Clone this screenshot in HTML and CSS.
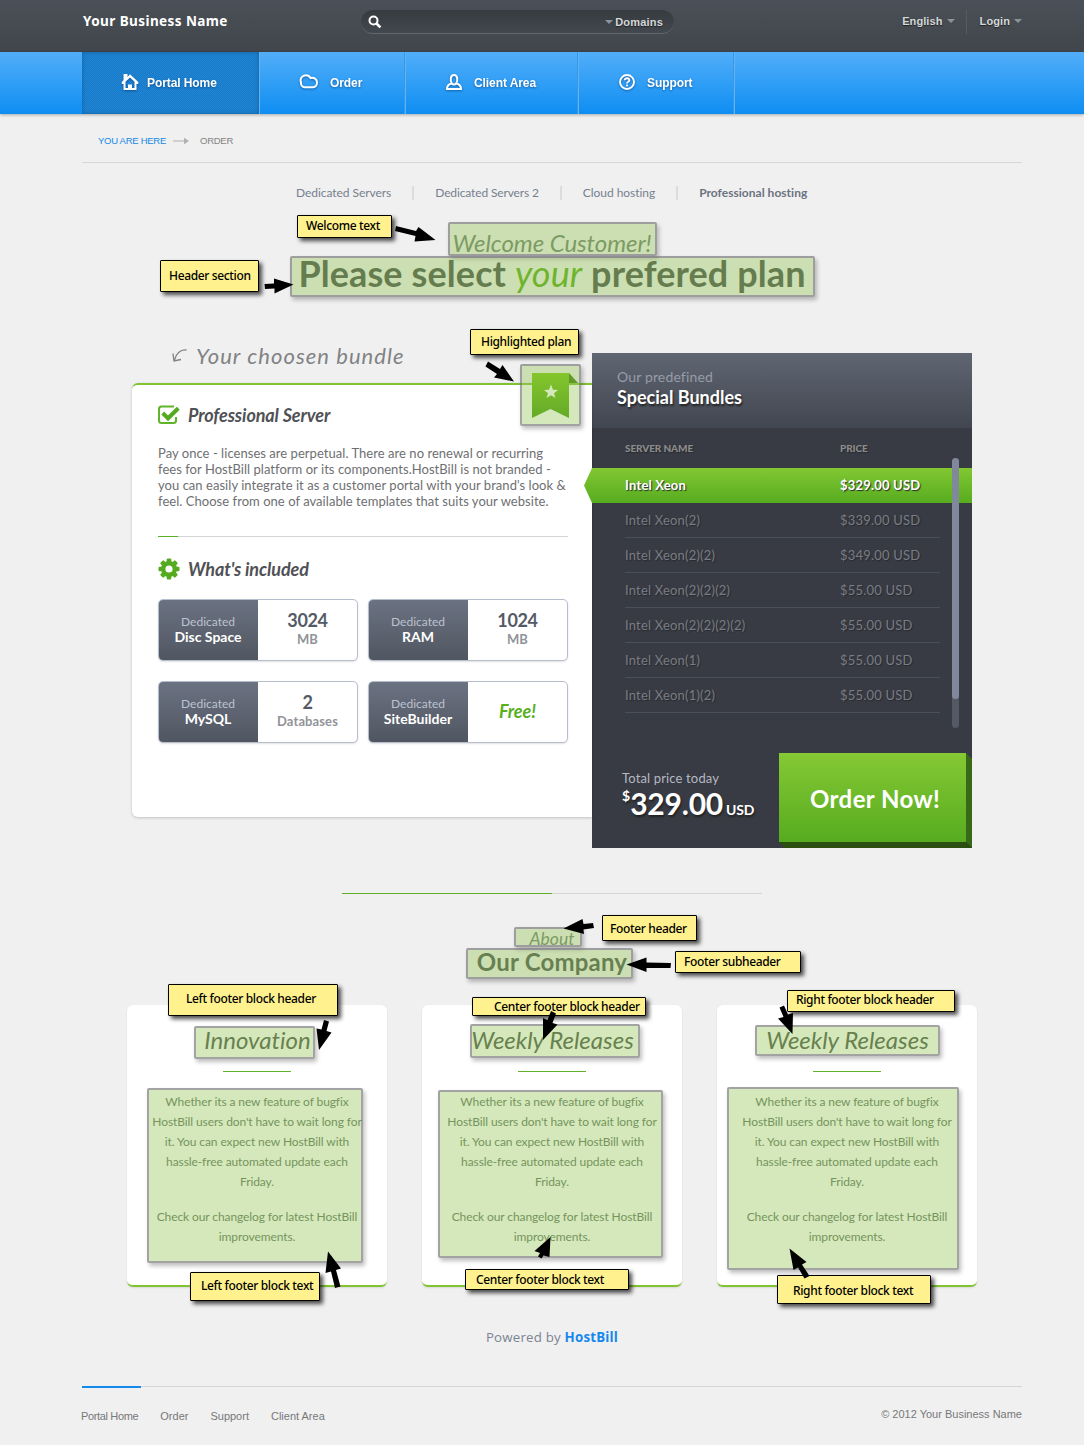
FILE: index.html
```html
<!DOCTYPE html>
<html lang="en">
<head>
<meta charset="utf-8">
<title>Your Business Name - Order</title>
<link rel="stylesheet" href="styles.css">
</head>
<body>
<header class="topbar">
  <div class="wrap topbar-in">
    <div class="brand">Your Business Name</div>
    <div class="search">
      <svg width="14" height="14" viewBox="0 0 14 14"><circle cx="5.5" cy="5.5" r="4" fill="none" stroke="#fff" stroke-width="2"/><path d="M8.5 8.5L12.4 12.4" stroke="#fff" stroke-width="2.6"/></svg>
      <span class="search-type"><i class="caret"></i>Domains</span>
    </div>
    <div class="account"><span class="lang">English<i class="caret"></i></span><span class="login">Login<i class="caret"></i></span></div>
  </div>
</header>
<nav class="mainnav">
  <div class="wrap mainnav-in">
    <a class="nav-item home active"><svg width="18" height="18" viewBox="0 0 18 18"><path d="M2.500 1H6.500V4L9 1.300L17.300 9V11H15.500V17H2.500V11H.7V9L2.500 7.300ZM4.500 8.800V15H7V11.500H11V15H13.500V8.800L9 4.500Z" fill="#fff" fill-rule="evenodd"/></svg><span>Portal Home</span></a>
    <a class="nav-item order"><svg width="20" height="18" viewBox="0 0 20 18"><path d="M6 14.300C3 14.300 1.800 11.800 2 9.500C.5 6 3 2.200 6.800 2.200C9 2.200 10.500 3.200 11.500 5C15 4.200 18 6 18 9.500C18 12.500 16 14.300 13.500 14.300Z" fill="none" stroke="#fff" stroke-width="2"/></svg><span>Order</span></a>
    <a class="nav-item client"><svg width="18" height="18" viewBox="0 0 18 18"><path d="M6.800 10.500C5 8 5.200 2 9 2S13 8 11.200 10.500C14 11 16 12 16 16H2C2 12 4 11 6.800 10.500C8 11.800 10 11.800 11.200 10.500" fill="none" stroke="#fff" stroke-width="2"/></svg><span>Client Area</span></a>
    <a class="nav-item support"><svg width="18" height="18" viewBox="0 0 18 18"><circle cx="9" cy="9" r="7" fill="none" stroke="#fff" stroke-width="1.900"/><path d="M6.700 7.200C6.700 4.500 11.300 4.600 11.300 7.200C11.300 8.800 9 8.700 9 10.400" fill="none" stroke="#fff" stroke-width="1.900"/><rect x="8" y="11.600" width="2" height="1.700" fill="#fff"/></svg><span>Support</span></a>
  </div>
</nav>
<main class="wrap">
  <div class="crumbs"><span class="here">YOU ARE HERE</span><svg width="16" height="8" viewBox="0 0 16 8"><path d="M0 4H12" stroke="#b0b0b0"/><path d="M11 .8L16 4L11 7.200Z" fill="#b0b0b0"/></svg><span>ORDER</span></div>
  <div class="tabs"><a>Dedicated Servers</a><a class="t2">Dedicated Servers 2</a><a class="t3">Cloud hosting</a><a class="t4">Professional hosting</a></div>
  <p class="welcome">Welcome Customer!</p>
  <h1 class="headline">Please select <em>your</em> prefered plan</h1>

  <section class="configurator">
    <div class="plan-col">
      <div class="script-note"><svg width="15" height="14" viewBox="0 0 15 14"><path d="M14.500 1C9 .5 4.500 4 2.500 11M1 4.500L2 12L9 10.500" fill="none" stroke="#808284" stroke-width="1.300"/></svg><span>Your choosen bundle</span></div>
      <div class="plan-card">
        <h2 class="plan-h"><svg width="22" height="20" viewBox="0 0 22 20"><path d="M16 1.500H3.500Q1 1.500 1 4V15.500Q1 18 3.500 18H15.500Q18 18 18 15.500V12" fill="none" stroke="#62b32a" stroke-width="2"/><path d="M4.800 8L10 13.300L20.300 3.200" fill="none" stroke="#55ab20" stroke-width="4"/></svg><span class="ph-a">Professional Server</span></h2>
        <p class="desc">Pay once - licenses are perpetual. There are no renewal or recurring<br>fees for HostBill platform or its components.HostBill is not branded -<br>you can easily integrate it as a customer portal with your brand's look &amp;<br>feel. Choose from one of available templates that suits your website.</p>
        <div class="rule"></div>
        <h2 class="plan-h"><svg width="22" height="22" viewBox="-11 -11 22 22"><g fill="#55ab20"><circle r="8"/><g id="teeth"><rect x="-2.300" y="-10.500" width="4.600" height="21" rx="1"/><rect x="-10.500" y="-2.300" width="21" height="4.600" rx="1"/></g><use href="#teeth" transform="rotate(45)"/></g><circle r="3.600" fill="#fff"/></svg><span class="ph-b">What's included</span></h2>
        <div class="specs">
          <div class="spec"><div class="spec-l"><small>Dedicated</small><b>Disc Space</b></div><div class="spec-r"><strong>3024</strong><small>MB</small></div></div>
          <div class="spec"><div class="spec-l"><small>Dedicated</small><b>RAM</b></div><div class="spec-r"><strong>1024</strong><small>MB</small></div></div>
          <div class="spec"><div class="spec-l"><small>Dedicated</small><b>MySQL</b></div><div class="spec-r"><strong>2</strong><small>Databases</small></div></div>
          <div class="spec"><div class="spec-l"><small>Dedicated</small><b>SiteBuilder</b></div><div class="spec-r"><em>Free!</em></div></div>
        </div>
        <svg class="ribbon" width="50" height="48" viewBox="0 0 50 48"><defs><linearGradient id="rg" x1="0" y1="0" x2="0" y2="1"><stop offset="0" stop-color="#7ac612"/><stop offset="1" stop-color="#45980a"/></linearGradient></defs><path d="M0 0H37V45L18.500 36L0 45Z" fill="url(#rg)"/><path d="M37 0L46 10H37Z" fill="#417a0a"/><path d="M19 11.500L21 16.800L26 17L22 20.300L23.500 25L19 22.300L14.500 25L16 20.300L12 17L17 16.800Z" fill="#fff"/></svg>
      </div>
    </div>
    <aside class="bundles">
      <header class="bundles-h"><span>Our predefined</span><b>Special Bundles</b></header>
      <div class="list">
        <div class="row thead"><span>SERVER NAME</span><span>PRICE</span></div>
        <div class="row on"><span>Intel Xeon</span><span>$329.00 USD</span></div>
        <div class="row"><span>Intel Xeon(2)</span><span>$339.00 USD</span></div>
        <div class="row"><span>Intel Xeon(2)(2)</span><span>$349.00 USD</span></div>
        <div class="row"><span>Intel Xeon(2)(2)(2)</span><span>$55.00 USD</span></div>
        <div class="row"><span>Intel Xeon(2)(2)(2)(2)</span><span>$55.00 USD</span></div>
        <div class="row"><span>Intel Xeon(1)</span><span>$55.00 USD</span></div>
        <div class="row"><span>Intel Xeon(1)(2)</span><span>$55.00 USD</span></div>
        <div class="scroll"><i></i></div>
      </div>
      <div class="checkout">
        <div class="total"><span>Total price today</span><div class="price"><sup>$</sup><b>329.00</b><small>USD</small></div></div>
        <a class="order-btn">Order Now!</a>
      </div>
    </aside>
  </section>

  <div class="divider"></div>
  <p class="about">About</p>
  <h2 class="company">Our Company</h2>
  <section class="blocks">
    <article class="block"><h3>Innovation</h3><hr><p>Whether its a new feature of bugfix<br>HostBill users don't have to wait long for<br>it. You can expect new HostBill with<br>hassle-free automated update each<br>Friday.</p><p>Check our changelog for latest HostBill<br>improvements.</p></article>
    <article class="block"><h3>Weekly Releases</h3><hr><p>Whether its a new feature of bugfix<br>HostBill users don't have to wait long for<br>it. You can expect new HostBill with<br>hassle-free automated update each<br>Friday.</p><p>Check our changelog for latest HostBill<br>improvements.</p></article>
    <article class="block"><h3>Weekly Releases</h3><hr><p>Whether its a new feature of bugfix<br>HostBill users don't have to wait long for<br>it. You can expect new HostBill with<br>hassle-free automated update each<br>Friday.</p><p>Check our changelog for latest HostBill<br>improvements.</p></article>
  </section>
  <p class="powered">Powered by <b>HostBill</b></p>
  <footer class="footer"><nav><a>Portal Home</a><a>Order</a><a>Support</a><a>Client Area</a></nav><span>© 2012 Your Business Name</span></footer>
</main>

<!-- highlight boxes, callouts and arrows laid over the page -->
<div class="notes">
  <div class="hl hl-1"></div><div class="hl hl-2"></div><div class="hl hl-3"></div><div class="hl hl-4"></div><div class="hl hl-5"></div>
  <div class="hl hl-6"></div><div class="hl hl-7"></div><div class="hl hl-8"></div><div class="hl hl-9"></div><div class="hl hl-10"></div><div class="hl hl-11"></div>
  <div class="tag tag-1"><span>Welcome text</span></div>
  <div class="tag tag-2"><span>Header section</span></div>
  <div class="tag tag-3"><span>Highlighted plan</span></div>
  <div class="tag tag-4"><span>Footer header</span></div>
  <div class="tag tag-5"><span>Footer subheader</span></div>
  <div class="tag tag-6"><span>Left footer block header</span></div>
  <div class="tag tag-7"><span>Center footer block header</span></div>
  <div class="tag tag-8"><span>Right footer block header</span></div>
  <div class="tag tag-9"><span>Left footer block text</span></div>
  <div class="tag tag-10"><span>Center footer block text</span></div>
  <div class="tag tag-11"><span>Right footer block text</span></div>
  <svg class="arrows" width="1084" height="1445" viewBox="0 0 1084 1445">
    <path d="M396 226L416 231L418.500 227L435.500 240L414.500 241.500L415.500 236L395 231Z"/>
    <path d="M264.500 284L274 283.500V278.500L293.500 284.500L274.500 293.500V288.500L265 289Z"/>
    <path d="M488 361.500L500 369L502.500 365L514 381.500L494 377.500L497 374L485.500 366.500Z"/>
    <path d="M593 923L583.500 924L582.500 919L563.500 928.500L584 934L583.500 929.500L594 928Z"/>
    <path d="M671 963L646.500 962.500V957.500L626.500 964.500L646.500 972V968L670.500 968Z"/>
    <path d="M324 1020L329 1021.500L326.500 1031L331.500 1032.500L319 1050L316.500 1028.500L321.500 1029.500Z"/>
    <path d="M551 1011L556 1013.500L552.500 1023L557.500 1024.500L543 1040L543 1018L547.500 1020Z"/>
    <path d="M779.500 1007.500L784 1005.500L788 1014.500L793 1013L792.500 1034L778 1018.500L783.500 1017Z"/>
    <path d="M335 1288L340.500 1286.500L336 1270L341 1268.500L328 1251.500L325.500 1273L331 1271.500Z"/>
    <path d="M538 1256.500L541.500 1258.500L543.500 1255.500L549.500 1257L550.500 1237L534.500 1251L540 1253Z"/>
    <path d="M804.500 1278.500L809.500 1276L802 1264.500L806.500 1262L789.500 1248.500L793.500 1270L798 1267.500Z"/>
  </svg>
</div>
</body>
</html>
```
FILE: styles.css
```css
*{box-sizing:border-box}
body{margin:0;background:#f0f0f0;font-family:Lato,"Open Sans",sans-serif;font-variant-ligatures:none;color:#68696c;position:relative;height:1445px;overflow:hidden}
h1,h2,h3,p{margin:0}
svg{display:block;flex:none}
.wrap{width:940px;margin:0 0 0 82px}

.topbar{height:52px;background:linear-gradient(#4a5057,#40464b)}
.topbar-in{display:flex;align-items:flex-start}
.brand{width:279px;padding:11px 0 0 1px;font:bold 13.500px/20px "Noto Sans",sans-serif;color:#fff;letter-spacing:.42px;white-space:nowrap}
.search{width:313px;height:24px;margin-top:10px;border-radius:12px;background:linear-gradient(#363b40,#42484e);border-bottom:1px solid #5f666e;display:flex;align-items:center;justify-content:space-between;padding:1px 11px 0 7px}
.caret{display:inline-block;border:4px solid transparent;border-top-color:#8b9299;border-bottom:0;vertical-align:2px}
.search-type,.account{font:bold 11px/14px "Liberation Sans",sans-serif;color:#d5d8da;text-shadow:0 1px 1px #222;letter-spacing:.1px}
.search-type .caret{margin-right:2px}
.search-type{letter-spacing:.2px}
.account{margin-left:auto;display:flex;height:24px;margin-top:10px;line-height:22px}
.account .caret{margin-left:4px}
.lang{padding-right:11px;border-right:1px solid #565c64}
.login{padding-left:13px}

.mainnav{height:62px;background:linear-gradient(#52aef9,#0e8ef2);box-shadow:0 1px 3px rgba(0,0,0,.3)}
.mainnav-in{display:flex;height:62px}
.nav-item{display:flex;align-items:center;height:62px;border-right:1px solid #64b2f3;box-shadow:inset -1px 0 #3798e4;font:bold 12px/16px "Liberation Sans",sans-serif;color:#fff;letter-spacing:-.08px}
.nav-item svg,.nav-item span{filter:drop-shadow(0 1px 1px rgba(0,50,110,.55))}
.nav-item svg{margin-bottom:2px}
.home{width:178px;padding-left:39px;gap:8px}
.order{width:146px;padding-left:39px;gap:11px}
.client{width:173px;padding-left:39px;gap:11px}
.support{width:156px;padding-left:39px;gap:11px}
.nav-item.active{background:conic-gradient(#1a77c4 25%,#1f88d8 0 50%,#1a77c4 0 75%,#1f88d8 0) 0 0/2px 2px;box-shadow:inset 0 0 4px #12609f}

.crumbs{height:49px;border-bottom:1px solid #d8d8d8;display:flex;align-items:center;padding:6px 0 0 16px;font:9.500px/14px "Liberation Sans",sans-serif;letter-spacing:-.27px;color:#838383}
.crumbs svg{margin:0 11px 0 7px}
.here{color:#1689e6}
.tabs{height:60px;display:flex;align-items:center;padding-left:214px;font-size:12px;line-height:14px;color:#77808e;letter-spacing:-.05px;white-space:nowrap}
.tabs a+a{border-left:2px solid #dcdcdc;padding-left:21px;margin-left:21px}
.tabs .t2{letter-spacing:-.13px}
.tabs .t4{font-weight:bold;color:#6b7381;letter-spacing:.02px}
.welcome{height:34px;line-height:40px;font-size:24px;font-style:italic;text-align:center;color:#6e7e6e;letter-spacing:-.06px}
.headline{height:48px;line-height:33px;font-size:36px;font-weight:bold;text-align:center;color:#474c4b;letter-spacing:.1px;white-space:nowrap}
.headline em{font-weight:normal;color:#57a912}

.configurator{display:flex;margin:48px 0 0 50px;width:840px}
.plan-col{width:460px}
.script-note{height:35px;margin-top:-5px;padding:0 0 20px 40px;display:flex;align-items:center;gap:9px;font-style:italic;font-size:22px;line-height:24px;color:#808284}
.script-note span{letter-spacing:1.050px;white-space:nowrap}
.plan-card{position:relative;height:434px;background:#fff;border-top:2px solid #82c332;border-radius:6px 0 0 6px;box-shadow:0 1px 3px rgba(0,0,0,.2);padding:18px 24px 0 26px}
.plan-h{display:flex;align-items:center;gap:8px;height:24px;font-size:18px;line-height:24px;font-style:italic;font-weight:bold;color:#505155;letter-spacing:-.1px;white-space:nowrap}
.desc{margin-top:18px;font-size:13px;line-height:16px;color:#6e6f72;letter-spacing:.04px;white-space:nowrap}
.rule{margin:27px 0 20px;height:1px;background:linear-gradient(90deg,#5bb022 20px,#d4d4d4 20px)}
.specs{display:grid;grid-template-columns:200px 200px;gap:20px 10px;margin-top:18px}
.spec{display:flex;height:62px;border:1px solid #b6bdcd;border-radius:5px;box-shadow:0 1px 2px rgba(0,0,0,.12);background:#fff;overflow:hidden}
.spec-l{width:100px;margin:-1px 0 -1px -1px;background:linear-gradient(#6b7282,#505660);color:#fff;text-align:center;display:flex;flex-direction:column;padding-top:16px}
.spec-l small{font-size:12px;line-height:14px;color:#bcc3d1}
.spec-l b{font-size:14px;line-height:15px}
.spec-r{flex:1;display:flex;flex-direction:column;align-items:center;padding-top:10px}
.spec-r strong{font-size:18px;line-height:21px;font-weight:bold;color:#545a66;letter-spacing:-.35px}
.spec-r small{font-size:13px;line-height:16px;color:#919399;font-weight:bold;letter-spacing:.1px}
.spec-r em{font-size:18px;line-height:38px;font-weight:bold;color:#59b01f}
.ribbon{position:absolute;left:400px;top:-12px}

.bundles{width:380px;height:495px;background:#383b43}
.bundles-h{height:75px;padding:15px 25px;background:linear-gradient(#5f6672,#424650);display:flex;flex-direction:column;color:#fff}
.bundles-h span{font-size:14px;line-height:18px;color:#969ca8;letter-spacing:.15px}
.bundles-h b{font-size:18px;line-height:22px;font-weight:bold;text-shadow:1px 2px 2px #222;letter-spacing:0}
.list{position:relative;height:325px}
.row{height:35px;margin:0 32px 0 33px;border-bottom:1px solid #4a4f5c;display:grid;grid-template-columns:215px 1fr;align-items:center;font-size:13px;color:#797c84;text-shadow:1px 1px 1px #292b31;letter-spacing:.2px}
.thead{height:40px;border:0;font-size:10px;font-weight:900;color:#8c8c8d;letter-spacing:-.1px}
.on{position:relative;margin:0;padding:0 0 1px 33px;border:0;background:linear-gradient(#82c732,#57ac20);color:#fff;font-weight:bold}
.on::before{content:"";position:absolute;left:-8px;top:0;width:8px;height:35px;background:linear-gradient(#82c732,#57ac20);clip-path:polygon(100% 0,100% 100%,0 50%)}
.scroll{position:absolute;right:13px;top:30px;width:7px;height:270px;border-radius:4px;background:#545965}
.scroll i{display:block;height:241px;border-radius:4px;background:#81889c}
.checkout{display:flex;height:95px;padding-left:30px}
.total{width:157px;padding-top:17px;color:#fff;white-space:nowrap}
.total>span{font-size:13px;line-height:16px;color:#b4b8c2;letter-spacing:.15px;display:block}
.price{display:flex;align-items:flex-start;height:34px;line-height:34px;text-shadow:1px 2px 2px #222}
.price sup{font-size:14px;line-height:20px;font-weight:bold}
.price b{font-size:30px;letter-spacing:-.2px}
.price small{font-size:14px;line-height:47px;font-weight:bold;margin-left:3px;letter-spacing:-.2px}
.order-btn{position:relative;width:187px;height:89px;background:linear-gradient(#85c934,#57ab20);color:#fff;font-size:24px;font-weight:bold;line-height:91px;padding-left:31px;letter-spacing:.4px;white-space:nowrap}
.order-btn::before{content:"";position:absolute;left:100%;top:0;width:6px;height:95px;background:#376917;clip-path:polygon(0 0,100% 6px,100% 100%,0 89px)}
.order-btn::after{content:"";position:absolute;left:0;top:100%;width:193px;height:6px;background:#2a4f11;clip-path:polygon(0 0,187px 0,193px 6px,6px 6px)}

.divider{width:420px;height:1px;margin:45px 0 0 260px;background:linear-gradient(90deg,#62af2c 50%,#d4d4d4 50%)}
.about{margin-top:36px;height:20px;line-height:18px;font-size:17.500px;font-style:italic;text-align:center;color:#6e7e6e}
.company{height:28px;line-height:24px;margin-bottom:27px;font-size:24px;font-weight:bold;text-align:center;color:#4b504f;letter-spacing:.2px}
.blocks{display:flex;gap:35px;margin-left:45px}
.block{width:260px;height:282px;background:#fff;border-radius:6px;border-bottom:2px solid #82c332;box-shadow:0 1px 2px rgba(0,0,0,.1);text-align:center;padding-top:20px;font-size:12px;line-height:20px;color:#637263;letter-spacing:-.1px;white-space:nowrap}
.block h3{height:32px;font-size:24px;line-height:30px;font-weight:normal;font-style:italic;color:#4b524b;padding-left:1px;letter-spacing:0}
.block hr{width:68px;height:1px;border:0;background:#62af2c;margin:14px auto 20px}
.block p+p{margin-top:15px}
.powered{margin-top:40px;text-align:center;font:13.300px/20px "Open Sans",sans-serif;letter-spacing:.2px;color:#7b8492}
.powered b{color:#1689ec}
.footer{position:relative;margin-top:39px;border-top:1px solid #d6d6d6;height:59px;display:flex;justify-content:space-between;padding-top:21px;font:11px/16px "Liberation Sans",sans-serif;color:#77787a}
.footer::before{content:"";position:absolute;left:0;top:-1px;width:59px;height:2px;background:#1689ec}
.footer nav{display:flex;gap:22px;margin-left:-1px}
.footer a:first-child{letter-spacing:-.35px}
.footer span{line-height:12px}

.notes{position:absolute;inset:0;width:1084px;height:1445px}
.hl{position:absolute;border:2px solid rgba(120,120,120,.68);border-radius:2px;background:rgba(147,197,85,.4);background-clip:padding-box;box-shadow:2px 3px 4px rgba(0,0,0,.25)}
.hl-1{left:448px;top:222px;width:209px;height:34px}
.hl-2{left:290px;top:256px;width:525px;height:41px}
.hl-3{left:520px;top:364px;width:61px;height:62px}
.hl-4{left:514px;top:927px;width:68px;height:20px}
.hl-5{left:466px;top:948px;width:167px;height:31px}
.hl-6{left:194px;top:1026px;width:121px;height:33px}
.hl-7{left:470px;top:1024px;width:170px;height:34px}
.hl-8{left:755px;top:1025px;width:185px;height:31px}
.hl-9{left:147px;top:1088px;width:216px;height:175px}
.hl-10{left:438px;top:1090px;width:225px;height:168px}
.hl-11{left:727px;top:1087px;width:232px;height:183px}
.tag{position:absolute;display:flex;align-items:center;border:1px solid #000;border-radius:1px;background:#fff28e;box-shadow:3px 3px 4px rgba(0,0,0,.7);font:500 12px/16px "Noto Sans",sans-serif;color:#000;letter-spacing:-.35px;white-space:nowrap}
.tag-1{left:297px;top:215px;width:95px;height:23px;padding:0 0 2px 8px}
.tag-2{left:160px;top:260px;width:99px;height:32px;padding-left:8px}
.tag-3{left:470px;top:329px;width:109px;height:26px;padding-left:10px}
.tag-4{left:602px;top:915px;width:95px;height:26px;padding:2px 0 0 7px}
.tag-5{left:675px;top:951px;width:126px;height:22px;padding-left:8px}
.tag-6{left:168px;top:984px;width:170px;height:32px;padding:0 0 2px 17px}
.tag-7{left:472px;top:997px;width:174px;height:19px;padding-left:21px}
.tag-8{left:787px;top:990px;width:168px;height:22px;padding:0 0 2px 8px}
.tag-9{left:190px;top:1272px;width:130px;height:29px;padding:0 0 1px 10px}
.tag-10{left:465px;top:1269px;width:164px;height:21px;padding-left:10px}
.tag-11{left:777px;top:1275px;width:154px;height:29px;padding:2px 0 0 15px}
.arrows{position:absolute;left:0;top:0}
```
